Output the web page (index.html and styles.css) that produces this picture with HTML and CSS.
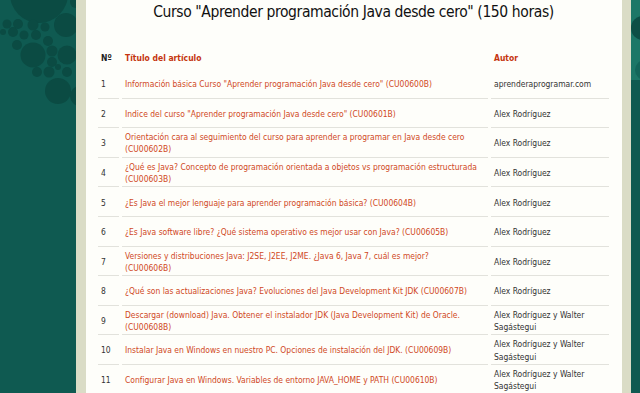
FILE: index.html
```html
<!DOCTYPE html>
<html lang="es">
<head>
<meta charset="utf-8">
<title>Curso Aprender programación Java desde cero</title>
<link rel="stylesheet" href="styles.css">
</head>
<body>
<div class="page">
  <div class="gutter gutter-left">
    <svg class="bubbles" width="76" height="110" viewBox="0 0 76 110" aria-hidden="true">
      <circle cx="39" cy="-6" r="29"/>
      <circle cx="66" cy="25" r="12"/>
      <circle cx="76" cy="2" r="6"/>
      <circle cx="7" cy="24" r="4.5"/>
      <circle cx="18" cy="24" r="5"/>
      <circle cx="13" cy="32" r="5"/>
      <circle cx="3" cy="32" r="3"/>
      <circle cx="24" cy="35" r="4.5"/>
      <circle cx="33" cy="25" r="5.5"/>
      <circle cx="36" cy="35" r="5"/>
      <circle cx="45" cy="27" r="4.5"/>
      <circle cx="48" cy="41" r="5"/>
      <circle cx="17" cy="45" r="5"/>
      <circle cx="33" cy="55" r="12.5"/>
      <circle cx="52" cy="51" r="5.5"/>
      <circle cx="67" cy="55" r="9.5"/>
      <circle cx="52" cy="62" r="5"/>
      <circle cx="58" cy="67" r="3"/>
      <circle cx="37" cy="72" r="5"/>
      <circle cx="49" cy="72" r="5.5"/>
      <circle cx="67" cy="72" r="5"/>
      <circle cx="58" cy="91" r="13"/>
      <circle cx="80" cy="96" r="10"/>
    </svg>
  </div>
  <main class="panel">
    <h1 class="course-title">Curso "Aprender programación Java desde cero" (150 horas)</h1>
    <table class="articles">
      <colgroup>
        <col class="col-num">
        <col class="col-title">
        <col class="col-author">
      </colgroup>
      <thead>
        <tr>
          <th class="num-head">Nº</th>
          <th class="link-head">Título del artículo</th>
          <th class="link-head">Autor</th>
        </tr>
      </thead>
      <tbody>
        <tr><td>1</td><td><a href="#">Información básica Curso "Aprender programación Java desde cero" (CU00600B)</a></td><td>aprenderaprogramar.com</td></tr>
        <tr><td>2</td><td><a href="#">Indice del curso "Aprender programación Java desde cero" (CU00601B)</a></td><td>Alex Rodríguez</td></tr>
        <tr><td>3</td><td><a href="#">Orientación cara al seguimiento del curso para aprender a programar en Java desde cero (CU00602B)</a></td><td>Alex Rodríguez</td></tr>
        <tr><td>4</td><td><a href="#">¿Qué es Java? Concepto de programación orientada a objetos vs programación estructurada (CU00603B)</a></td><td>Alex Rodríguez</td></tr>
        <tr><td>5</td><td><a href="#">¿Es Java el mejor lenguaje para aprender programación básica? (CU00604B)</a></td><td>Alex Rodríguez</td></tr>
        <tr><td>6</td><td><a href="#">¿Es Java software libre? ¿Qué sistema operativo es mejor usar con Java? (CU00605B)</a></td><td>Alex Rodríguez</td></tr>
        <tr><td>7</td><td><a href="#">Versiones y distribuciones Java: J2SE, J2EE, J2ME. ¿Java 6, Java 7, cuál es mejor?<br>(CU00606B)</a></td><td>Alex Rodríguez</td></tr>
        <tr><td>8</td><td><a href="#">¿Qué son las actualizaciones Java? Evoluciones del Java Development Kit JDK (CU00607B)</a></td><td>Alex Rodríguez</td></tr>
        <tr><td>9</td><td><a href="#">Descargar (download) Java. Obtener el instalador JDK (Java Development Kit) de Oracle. (CU00608B)</a></td><td>Alex Rodríguez y Walter Sagástegui</td></tr>
        <tr><td>10</td><td><a href="#">Instalar Java en Windows en nuestro PC. Opciones de instalación del JDK. (CU00609B)</a></td><td>Alex Rodríguez y Walter Sagástegui</td></tr>
        <tr><td>11</td><td><a href="#">Configurar Java en Windows. Variables de entorno JAVA_HOME y PATH (CU00610B)</a></td><td>Alex Rodríguez y Walter Sagástegui</td></tr>
      </tbody>
    </table>
  </main>
  <div class="gutter gutter-right">
    <svg class="bubbles-right" width="9" height="120" viewBox="0 0 9 120" aria-hidden="true">
      <rect x="0" y="0" width="9" height="80" fill="#1c7767"/>
      <circle cx="12" cy="28" r="12" fill="#0d4f46"/>
      <circle cx="14" cy="70" r="10" fill="#13665a"/>
    </svg>
  </div>
</div>
</body>
</html>
```
FILE: styles.css
```css
html, body {
  margin: 0;
  padding: 0;
}

body {
  background: #0f5a51;
  font-family: "DejaVu Sans Condensed", "DejaVu Sans", sans-serif;
  font-stretch: condensed;
  overflow: hidden;
}

.page {
  display: flex;
  align-items: stretch;
  min-height: 393px;
}

.gutter {
  background: #0f5a51;
  flex: none;
}

.gutter-left {
  width: 76px;
}

.gutter-right {
  width: 9px;
}

.bubbles {
  display: block;
  fill: #0b4b43;
}

.bubbles-right {
  display: block;
}

.panel {
  flex: none;
  width: 517px;
  background: #fefefa;
  border-left: 10px solid #dadcc6;
  border-right: 9px solid #dadcc6;
  padding: 0 10px 0 9px;
  box-sizing: content-box;
}

.course-title {
  margin: 0;
  padding-top: 2px;
  font-weight: normal;
  font-size: 15.5px;
  letter-spacing: -0.4px;
  line-height: 20px;
  color: #111;
  text-align: center;
}

.articles {
  margin-top: 24px;
  width: 517px;
  table-layout: fixed;
  border-collapse: separate;
  border-spacing: 3px 2px;
  font-size: 8.45px;
  line-height: 12.3px;
  color: #333;
}

.col-num { width: 21px; }
.col-title { width: 366px; }
.col-author { width: 118px; }

.articles th {
  height: 18px;
  padding: 1px 3px;
  text-align: left;
  font-weight: bold;
  font-size: 8.5px;
  vertical-align: middle;
  border-bottom: 1px solid transparent;
}

.num-head {
  color: #222;
}

.link-head {
  color: #c5350f;
}

.articles td {
  height: 24.6px;
  padding: 1px 3px;
  vertical-align: middle;
  border-bottom: 1px solid #e2e2dc;
}

.articles a {
  color: #d0481d;
  text-decoration: none;
}
```
